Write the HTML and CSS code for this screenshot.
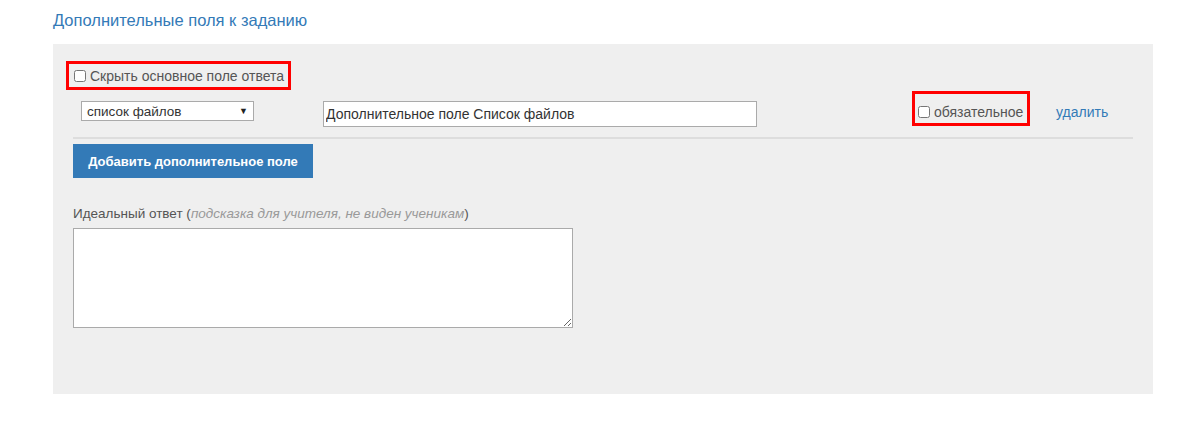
FILE: index.html
```html
<!DOCTYPE html>
<html lang="ru">
<head>
    <meta charset="UTF-8">
    <title>Дополнительные поля к заданию</title>
    <link rel="stylesheet" href="styles.css">
</head>
<body>

<h3 class="section-title">Дополнительные поля к заданию</h3>

<div class="panel">
    <label class="hide-main marked">
        <input type="checkbox">
        <span>Скрыть основное поле ответа</span>
    </label>

    <div class="field-row">
        <div class="fake-select">
            <span>список файлов</span>
            <span class="arrow">&#9660;</span>
        </div>
        <input class="field-name" type="text" value="Дополнительное поле Список файлов">
        <label class="required marked">
            <input type="checkbox">
            <span>обязательное</span>
        </label>
        <a href="#" class="remove">удалить</a>
    </div>

    <div class="separator"></div>

    <button class="add-btn">Добавить дополнительное поле</button>

    <div class="ideal">
        <label>Идеальный ответ (<i>подсказка для учителя, не виден ученикам</i>)</label>
        <textarea></textarea>
    </div>
</div>

</body>
</html>
```

FILE: styles.css
```css
body {
    font-family: "Liberation Sans", Arial, sans-serif;
    font-size: 14px;
    color: #555;
    background-color: #fff;
    margin: 0;
    padding: 0;
}
.section-title {
    margin: 0;
    padding: 11px 0 0 53px;
    height: 44px;
    box-sizing: border-box;
    font-size: 16.5px;
    font-weight: normal;
    color: #337ab7;
}
.panel {
    width: 1100px;
    height: 350px;
    margin-left: 53px;
    padding: 17px 20px 0 20px;
    box-sizing: border-box;
    background-color: #efefef;
}
.marked {
    display: inline-flex;
    align-items: center;
    border: 3px solid #f00;
    box-sizing: border-box;
}
.marked input {
    margin: 0 4px 0 0;
    width: 12px;
    height: 12px;
}
.hide-main {
    margin-left: -7px;
    width: 225px;
    height: 29px;
    padding-left: 5px;
    padding-top: 1px;
}
.field-row {
    display: flex;
    align-items: flex-start;
    margin-top: 1px;
    height: 36px;
}
.fake-select {
    margin: 10px 0 0 8px;
    width: 173px;
    height: 20px;
    box-sizing: border-box;
    border: 1px solid #aaa;
    background: #fff;
    color: #333;
    font-size: 13.5px;
    display: flex;
    align-items: center;
    justify-content: space-between;
    padding: 0 5px;
}
.fake-select .arrow {
    font-size: 9px;
    color: #222;
}
.field-name {
    margin: 10px 0 0 69px;
    width: 434px;
    height: 26px;
    box-sizing: border-box;
    border: 1px solid #aaa;
    padding: 0 2px;
    font-family: inherit;
    font-size: 14px;
    color: #333;
}
.required {
    margin-left: 155px;
    width: 118px;
    height: 35px;
    padding: 6px 0 0 3px;
}
.remove {
    margin: 13px 0 0 26px;
    color: #337ab7;
    text-decoration: none;
}
.separator {
    margin-top: 10px;
    border-top: 2px solid #ddd;
}
.add-btn {
    display: block;
    margin-top: 5px;
    width: 240px;
    height: 34px;
    border: none;
    background-color: #337ab7;
    color: #fff;
    font-family: inherit;
    font-size: 13px;
    font-weight: bold;
    cursor: pointer;
}
.ideal {
    margin-top: 28px;
}
.ideal label {
    display: block;
    font-size: 13.5px;
    color: #555;
}
.ideal i {
    color: #999;
}
.ideal textarea {
    display: block;
    margin-top: 7px;
    width: 500px;
    height: 100px;
    box-sizing: border-box;
    border: 1px solid #aaa;
}
```
